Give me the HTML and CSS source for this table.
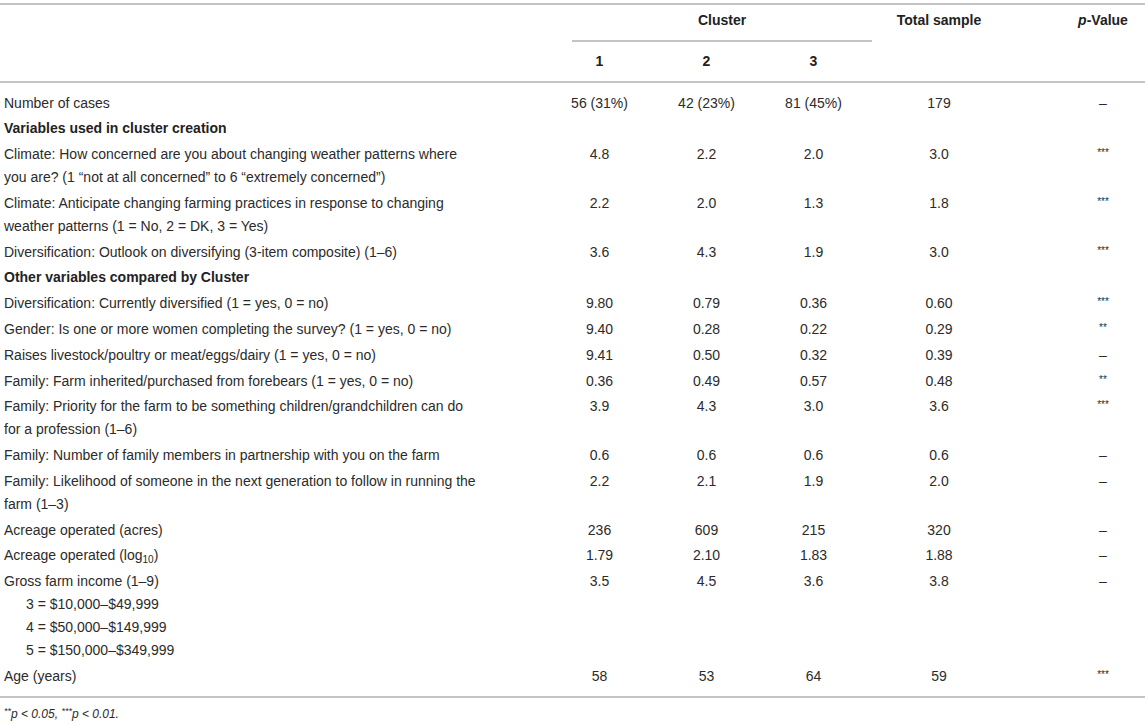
FILE: index.html
```html
<!DOCTYPE html>
<html lang="en">
<head>
    <meta charset="UTF-8">
    <meta name="viewport" content="width=device-width, initial-scale=1.0">
    <title>Cluster characteristics</title>
    <link rel="stylesheet" href="styles.css">
</head>
<body>
    <table class="results">
        <colgroup>
            <col class="col-label">
            <col class="col-num">
            <col class="col-num">
            <col class="col-num">
            <col class="col-total">
            <col class="col-p">
        </colgroup>
        <thead>
            <tr class="head-top">
                <th></th>
                <th colspan="3"><div class="cluster-head">Cluster</div></th>
                <th>Total sample</th>
                <th class="p-col"><i>p</i>-Value</th>
            </tr>
            <tr class="head-sub">
                <th></th>
                <th>1</th>
                <th>2</th>
                <th>3</th>
                <th></th>
                <th class="p-col"></th>
            </tr>
        </thead>
        <tbody>
            <tr class="first">
                <td class="label">Number of cases</td>
                <td>56 (31%)</td><td>42 (23%)</td><td>81 (45%)</td><td>179</td><td class="p-col">–</td>
            </tr>
            <tr>
                <td class="label section" colspan="6">Variables used in cluster creation</td>
            </tr>
            <tr>
                <td class="label">Climate: How concerned are you about changing weather patterns where you are? (1 “not at all concerned” to 6 “extremely concerned”)</td>
                <td>4.8</td><td>2.2</td><td>2.0</td><td>3.0</td><td class="p-col"><span class="stars">***</span></td>
            </tr>
            <tr>
                <td class="label">Climate: Anticipate changing farming practices in response to changing weather patterns (1 = No, 2 = DK, 3 = Yes)</td>
                <td>2.2</td><td>2.0</td><td>1.3</td><td>1.8</td><td class="p-col"><span class="stars">***</span></td>
            </tr>
            <tr>
                <td class="label">Diversification: Outlook on diversifying (3-item composite) (1–6)</td>
                <td>3.6</td><td>4.3</td><td>1.9</td><td>3.0</td><td class="p-col"><span class="stars">***</span></td>
            </tr>
            <tr>
                <td class="label section" colspan="6">Other variables compared by Cluster</td>
            </tr>
            <tr>
                <td class="label">Diversification: Currently diversified (1 = yes, 0 = no)</td>
                <td>9.80</td><td>0.79</td><td>0.36</td><td>0.60</td><td class="p-col"><span class="stars">***</span></td>
            </tr>
            <tr>
                <td class="label">Gender: Is one or more women completing the survey? (1 = yes, 0 = no)</td>
                <td>9.40</td><td>0.28</td><td>0.22</td><td>0.29</td><td class="p-col"><span class="stars">**</span></td>
            </tr>
            <tr>
                <td class="label">Raises livestock/poultry or meat/eggs/dairy (1 = yes, 0 = no)</td>
                <td>9.41</td><td>0.50</td><td>0.32</td><td>0.39</td><td class="p-col">–</td>
            </tr>
            <tr>
                <td class="label">Family: Farm inherited/purchased from forebears (1 = yes, 0 = no)</td>
                <td>0.36</td><td>0.49</td><td>0.57</td><td>0.48</td><td class="p-col"><span class="stars">**</span></td>
            </tr>
            <tr>
                <td class="label">Family: Priority for the farm to be something children/grandchildren can do for a profession (1–6)</td>
                <td>3.9</td><td>4.3</td><td>3.0</td><td>3.6</td><td class="p-col"><span class="stars">***</span></td>
            </tr>
            <tr>
                <td class="label">Family: Number of family members in partnership with you on the farm</td>
                <td>0.6</td><td>0.6</td><td>0.6</td><td>0.6</td><td class="p-col">–</td>
            </tr>
            <tr>
                <td class="label">Family: Likelihood of someone in the next generation to follow in running the farm (1–3)</td>
                <td>2.2</td><td>2.1</td><td>1.9</td><td>2.0</td><td class="p-col">–</td>
            </tr>
            <tr>
                <td class="label">Acreage operated (acres)</td>
                <td>236</td><td>609</td><td>215</td><td>320</td><td class="p-col">–</td>
            </tr>
            <tr>
                <td class="label">Acreage operated (log<sub>10</sub>)</td>
                <td>1.79</td><td>2.10</td><td>1.83</td><td>1.88</td><td class="p-col">–</td>
            </tr>
            <tr>
                <td class="label">
                    Gross farm income (1–9)
                    <div class="sub">3 = $10,000–$49,999</div>
                    <div class="sub">4 = $50,000–$149,999</div>
                    <div class="sub">5 = $150,000–$349,999</div>
                </td>
                <td>3.5</td><td>4.5</td><td>3.6</td><td>3.8</td><td class="p-col">–</td>
            </tr>
            <tr class="last">
                <td class="label">Age (years)</td>
                <td>58</td><td>53</td><td>64</td><td>59</td><td class="p-col"><span class="stars">***</span></td>
            </tr>
        </tbody>
    </table>

    <p class="footnote"><sup>**</sup>p &lt; 0.05, <sup>***</sup>p &lt; 0.01.</p>
</body>
</html>
```

FILE: styles.css
```css
body {
    margin: 0;
    background: #ffffff;
    color: #2b2b2b;
    font-family: "Liberation Sans", Arial, sans-serif;
    font-size: 14px;
}

.results {
    width: 1145px;
    margin-top: 3px;
    border-collapse: collapse;
    table-layout: fixed;
    border-top: 2px solid #c4c4c4;
    border-bottom: 2px solid #c4c4c4;
}

.col-label {
    width: 546px;
}

.col-num {
    width: 107px;
}

.col-total {
    width: 144px;
}

.col-p {
    width: 134px;
}

th,
td {
    padding: 1.4px 0;
    line-height: 23px;
    text-align: center;
    vertical-align: top;
    font-weight: normal;
}

thead th {
    font-weight: bold;
    color: #222;
}

.head-top th {
    padding-top: 3.5px;
    padding-bottom: 0;
}

.cluster-head {
    margin: 0 -5px 0 26px;
    padding-bottom: 8.5px;
    border-bottom: 2px solid #c4c4c4;
}

.head-sub th {
    padding-top: 7.5px;
    padding-bottom: 8.5px;
    border-bottom: 2px solid #c4c4c4;
}

.p-col {
    padding-left: 50px;
}

.first td {
    padding-top: 8.5px;
}

.last td {
    padding-bottom: 8px;
}

td.label {
    text-align: left;
    padding-left: 4px;
    padding-right: 64px;
}

td.section {
    font-weight: bold;
    color: #222;
}

.sub {
    padding-left: 22px;
}

sub {
    font-size: 10px;
    line-height: 0;
    vertical-align: -3px;
}

.stars {
    font-size: 10px;
    line-height: 0;
    vertical-align: 3px;
}

.footnote {
    margin: 8px 0 0 4px;
    font-size: 12px;
    line-height: 16px;
    font-style: italic;
}

.footnote sup {
    font-size: 9px;
    line-height: 0;
    vertical-align: 4px;
}
```
